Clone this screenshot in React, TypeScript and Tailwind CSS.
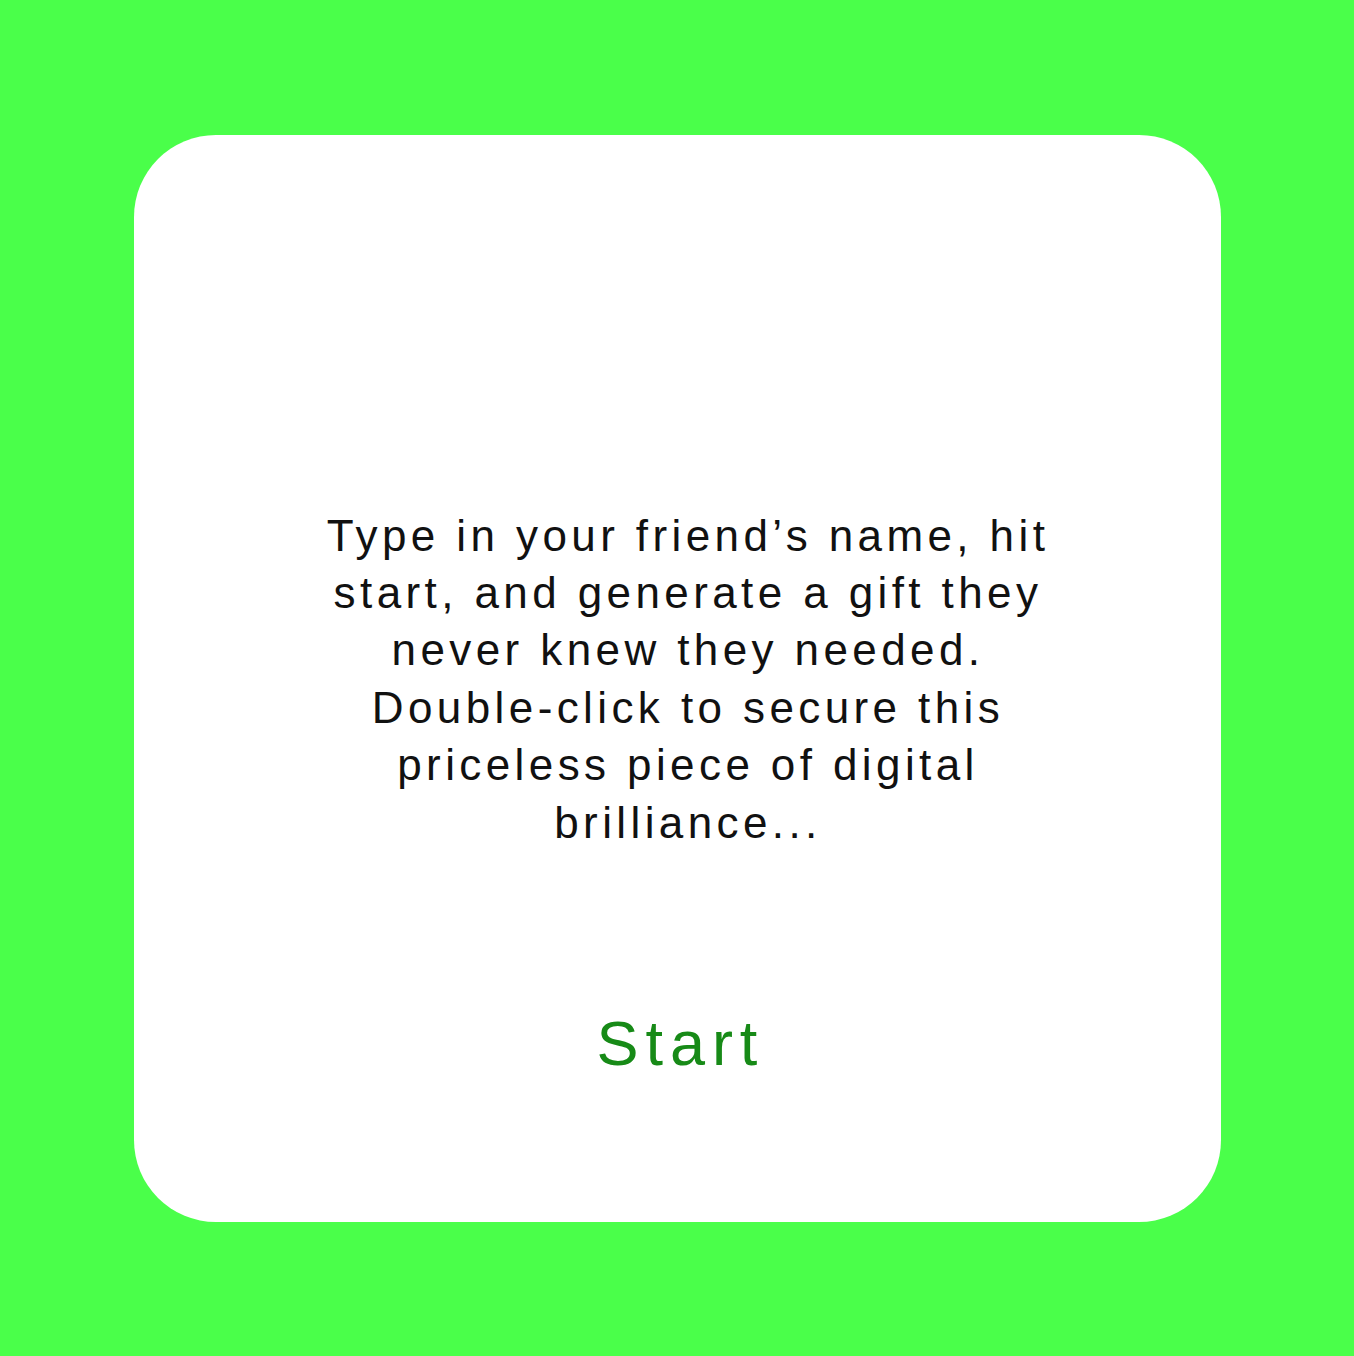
export default function App() {
  return (
    <div className="min-h-screen w-full bg-[#4aff4a] flex items-center justify-center">
      <div className="w-[1087px] h-[1087px] bg-white rounded-[82px] flex flex-col items-center pt-[372px]">
        <p
          className="w-[770px] pl-[22px] text-center text-[44px] leading-[57.4px] tracking-[0.1em] text-[#111]"
          style={{ fontFamily: '"Liberation Sans", Arial, sans-serif' }}
        >
          Type in your friend’s name, hit start, and generate a gift they never knew they needed. Double-click to secure this priceless piece of digital brilliance...
        </p>
        <button
          className="mt-[161px] text-[63px] leading-none tracking-[0.11em] text-[#178a17] pl-[0.11em]"
          style={{ fontFamily: '"Liberation Sans", Arial, sans-serif' }}
        >
          Start
        </button>
      </div>
    </div>
  );
}
